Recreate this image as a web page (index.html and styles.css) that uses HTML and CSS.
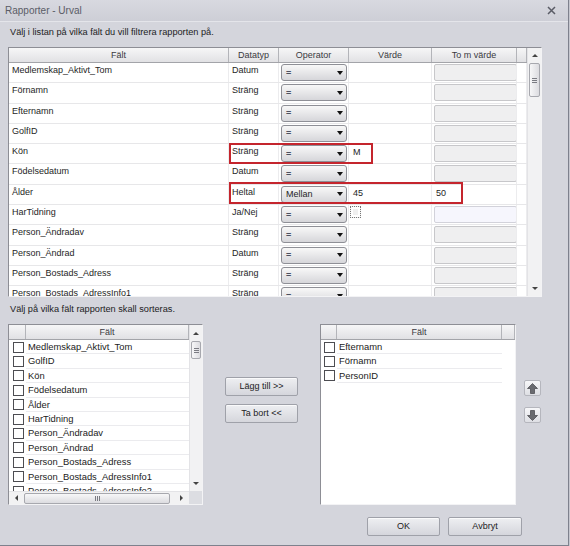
FILE: index.html
```html
<!DOCTYPE html>
<html>
<head>
<meta charset="utf-8">
<link rel="stylesheet" href="styles.css">
</head>
<body>
<div class="window">
  <div class="titlebar">
    <span class="title">Rapporter - Urval</span>
    <svg class="close" width="9" height="9" viewBox="0 0 9 9"><path d="M1 1L8 8M8 1L1 8" stroke="#5a5c66" stroke-width="1.5" fill="none"/></svg>
  </div>

  <div class="label label-top">Välj i listan på vilka fält du vill filtrera rapporten på.</div>

  <div class="grid">
    <div class="table">
      <div class="row head">
        <div class="hc">Fält</div><div class="hc">Datatyp</div><div class="hc">Operator</div><div class="hc">Värde</div><div class="hc">To m värde</div><div class="hc"></div>
      </div>
      <div class="row"><div class="c">Medlemskap_Aktivt_Tom</div><div class="c">Datum</div><div class="c"><div class="combo"><span class="eq">=</span><i class="tri"></i></div></div><div class="c"></div><div class="c"><div class="box"></div></div><div class="c"></div></div>
      <div class="row"><div class="c">Förnamn</div><div class="c">Sträng</div><div class="c"><div class="combo"><span class="eq">=</span><i class="tri"></i></div></div><div class="c"></div><div class="c"><div class="box"></div></div><div class="c"></div></div>
      <div class="row"><div class="c">Efternamn</div><div class="c">Sträng</div><div class="c"><div class="combo"><span class="eq">=</span><i class="tri"></i></div></div><div class="c"></div><div class="c"><div class="box"></div></div><div class="c"></div></div>
      <div class="row"><div class="c">GolfID</div><div class="c">Sträng</div><div class="c"><div class="combo"><span class="eq">=</span><i class="tri"></i></div></div><div class="c"></div><div class="c"><div class="box"></div></div><div class="c"></div></div>
      <div class="row"><div class="c">Kön</div><div class="c">Sträng</div><div class="c"><div class="combo"><span class="eq">=</span><i class="tri"></i></div></div><div class="c val">M</div><div class="c"><div class="box"></div></div><div class="c"></div></div>
      <div class="row"><div class="c">Födelsedatum</div><div class="c">Datum</div><div class="c"><div class="combo"><span class="eq">=</span><i class="tri"></i></div></div><div class="c"></div><div class="c"><div class="box"></div></div><div class="c"></div></div>
      <div class="row"><div class="c">Ålder</div><div class="c">Heltal</div><div class="c"><div class="combo"><span class="op">Mellan</span><i class="tri"></i></div></div><div class="c val">45</div><div class="c val">50</div><div class="c"></div></div>
      <div class="row"><div class="c">HarTidning</div><div class="c">Ja/Nej</div><div class="c"><div class="combo"><span class="eq">=</span><i class="tri"></i></div></div><div class="c"><div class="dotbox"></div></div><div class="c"><div class="box light"></div></div><div class="c"></div></div>
      <div class="row"><div class="c">Person_Ändradav</div><div class="c">Sträng</div><div class="c"><div class="combo"><span class="eq">=</span><i class="tri"></i></div></div><div class="c"></div><div class="c"><div class="box"></div></div><div class="c"></div></div>
      <div class="row"><div class="c">Person_Ändrad</div><div class="c">Datum</div><div class="c"><div class="combo"><span class="eq">=</span><i class="tri"></i></div></div><div class="c"></div><div class="c"><div class="box"></div></div><div class="c"></div></div>
      <div class="row"><div class="c">Person_Bostads_Adress</div><div class="c">Sträng</div><div class="c"><div class="combo"><span class="eq">=</span><i class="tri"></i></div></div><div class="c"></div><div class="c"><div class="box"></div></div><div class="c"></div></div>
      <div class="row"><div class="c">Person_Bostads_AdressInfo1</div><div class="c">Sträng</div><div class="c"><div class="combo"><span class="eq">=</span><i class="tri"></i></div></div><div class="c"></div><div class="c"><div class="box"></div></div><div class="c"></div></div>
    </div>
    <div class="vscroll">
      <div class="sbtn"><i class="up"></i></div>
      <div class="thumb"><span></span><span></span><span></span></div>
      <div class="track"></div>
      <div class="sbtn"><i class="down"></i></div>
    </div>
    <div class="mark mark-kon"></div>
    <div class="mark mark-alder"></div>
  </div>

  <div class="label label-bottom">Välj på vilka fält rapporten skall sorteras.</div>

  <div class="sortarea">
    <div class="list left">
      <div class="ltable">
        <div class="lrow lhead"><div class="hc"></div><div class="hc">Fält</div></div>
        <div class="lrow"><div class="cb"><i></i></div><div class="lt">Medlemskap_Aktivt_Tom</div></div>
        <div class="lrow"><div class="cb"><i></i></div><div class="lt">GolfID</div></div>
        <div class="lrow"><div class="cb"><i></i></div><div class="lt">Kön</div></div>
        <div class="lrow"><div class="cb"><i></i></div><div class="lt">Födelsedatum</div></div>
        <div class="lrow"><div class="cb"><i></i></div><div class="lt">Ålder</div></div>
        <div class="lrow"><div class="cb"><i></i></div><div class="lt">HarTidning</div></div>
        <div class="lrow"><div class="cb"><i></i></div><div class="lt">Person_Ändradav</div></div>
        <div class="lrow"><div class="cb"><i></i></div><div class="lt">Person_Ändrad</div></div>
        <div class="lrow"><div class="cb"><i></i></div><div class="lt">Person_Bostads_Adress</div></div>
        <div class="lrow"><div class="cb"><i></i></div><div class="lt">Person_Bostads_AdressInfo1</div></div>
        <div class="lrow"><div class="cb"><i></i></div><div class="lt">Person_Bostads_AdressInfo2</div></div>
      </div>
      <div class="vscroll small">
        <div class="sbtn"><i class="up"></i></div>
        <div class="thumb"><span></span><span></span><span></span></div>
        <div class="track"></div>
        <div class="sbtn"><i class="down"></i></div>
      </div>
      <div class="hscroll">
        <div class="hbtn"><i class="lefta"></i></div>
        <div class="hthumb"><span></span><span></span><span></span></div>
        <div class="htrack"></div>
        <div class="hbtn"><i class="righta"></i></div>
      </div>
      <div class="corner"></div>
    </div>

    <div class="midbtns">
      <div class="btn">Lägg till &gt;&gt;</div>
      <div class="btn">Ta bort &lt;&lt;</div>
    </div>

    <div class="list right">
      <div class="rtable">
        <div class="rrow rhead"><div class="hc"></div><div class="hc">Fält</div><div class="hc"></div></div>
        <div class="rrow"><div class="cb"><i></i></div><div class="lt">Efternamn</div></div>
        <div class="rrow"><div class="cb"><i></i></div><div class="lt">Förnamn</div></div>
        <div class="rrow"><div class="cb"><i></i></div><div class="lt">PersonID</div></div>
      </div>
    </div>

    <div class="movebtns">
      <div class="mbtn"><svg width="11" height="11" viewBox="0 0 11 11"><path d="M5.5 0.5L10.5 5.5H7.5V10.5H3.5V5.5H0.5Z" fill="#6a6b70" stroke="#505156" stroke-width="0.8"/></svg></div>
      <div class="mbtn"><svg width="11" height="11" viewBox="0 0 11 11"><path d="M5.5 10.5L10.5 5.5H7.5V0.5H3.5V5.5H0.5Z" fill="#6a6b70" stroke="#505156" stroke-width="0.8"/></svg></div>
    </div>
  </div>

  <div class="footer">
    <div class="btn fbtn">OK</div>
    <div class="btn fbtn wide">Avbryt</div>
  </div>
</div>
</body>
</html>
```

FILE: styles.css
```css
* { box-sizing: border-box; }
html, body { margin: 0; padding: 0; }
body {
  width: 570px;
  height: 546px;
  overflow: hidden;
  background: #c6c7cf;
  font-family: "Liberation Sans", Arial, sans-serif;
  color: #1e1e1e;
}
.window {
  width: 569px;
  height: 546px;
  background: #d4d5dc;
  border-right: 1px solid #7e818d;
  border-bottom: 1px solid #7e818d;
  display: flex;
  flex-direction: column;
}
.titlebar {
  height: 22px;
  flex: none;
  display: flex;
  align-items: center;
  justify-content: space-between;
  padding: 0 12px 0 5px;
  background: linear-gradient(#d8d9e0, #cdced6);
  border-bottom: 1px solid #e4e5ea;
  font-size: 10px;
  color: #5a5c66;
}
.close { display: block; }

.label {
  font-size: 9.2px;
  line-height: 12px;
  padding-left: 10px;
  color: #1c1c1c;
  flex: none;
}
.label-top { margin-top: 4px; }
.label-bottom { margin-top: 6px; }

/* top grid */
.grid {
  position: relative;
  flex: none;
  margin: 9px 0 0 8px;
  width: 534px;
  height: 250px;
  display: flex;
  background: #fff;
  border: 1px solid;
  border-color: #8d8e95 #f3f3f5 #f3f3f5 #8d8e95;
}
.table {
  width: 518px;
  display: flex;
  flex-direction: column;
  overflow: hidden;
}
.row {
  flex: none;
  display: grid;
  grid-template-columns: 220px 50px 70px 83px 85px 10px;
  height: 20.3px;
  border-bottom: 1px solid #e7e7e9;
  font-size: 9px;
  line-height: 12px;
}
.row.head {
  height: 15px;
  border-bottom: 1px solid #a3a4a9;
}
.hc {
  background: linear-gradient(#f6f6f7, #e1e1e4);
  border-right: 1px solid #b3b4b9;
  text-align: center;
  font-size: 9px;
  line-height: 14px;
  color: #3a3a3e;
}
.c {
  border-right: 1px solid #ececee;
  padding: 1px 0 0 3px;
  white-space: nowrap;
  overflow: hidden;
}
.c.val { padding-left: 4px; padding-top: 2px; }
.combo {
  margin: 0 0 0 -1px;
  width: 66px;
  height: 17px;
  border: 1px solid #8e8f96;
  border-radius: 3px;
  background: linear-gradient(#f8f8f8, #d6d6da);
  display: flex;
  align-items: center;
  padding: 0 3px 0 4px;
}
.eq { color: #4c5060; font-size: 9px; font-weight: bold; }
.op { color: #1e1e1e; font-size: 9px; }
.tri {
  margin-left: auto;
  width: 0;
  height: 0;
  border-left: 3.5px solid transparent;
  border-right: 3.5px solid transparent;
  border-top: 4px solid #111;
}
.box {
  margin: 0 0 0 -1px;
  width: 83px;
  height: 17px;
  border: 1px solid #c7c7ca;
  border-radius: 2px;
  background: #efeff0;
}
.box.light { background: #f6f6fd; border-color: #d2d2da; }
.dotbox {
  width: 11px;
  height: 12px;
  margin: 0 0 0 -2px;
  border: 1px dotted #777;
  background: #f0f0f0;
  box-shadow: inset 0 0 0 2px #fff;
}

/* scrollbars */
.vscroll {
  width: 14px;
  display: flex;
  flex-direction: column;
  background: #f2f2f3;
  border-left: 1px solid #e3e3e6;
}
.sbtn {
  height: 15px;
  flex: none;
  display: flex;
  align-items: center;
  justify-content: center;
}
.up, .down, .lefta, .righta {
  width: 0; height: 0;
}
.up { border-left: 3px solid transparent; border-right: 3px solid transparent; border-bottom: 3px solid #444; }
.down { border-left: 3px solid transparent; border-right: 3px solid transparent; border-top: 3px solid #444; }
.lefta { border-top: 3px solid transparent; border-bottom: 3px solid transparent; border-right: 3px solid #444; }
.righta { border-top: 3px solid transparent; border-bottom: 3px solid transparent; border-left: 3px solid #444; }
.thumb {
  flex: none;
  height: 34px;
  margin: 0 1px 0 1px;
  border: 1px solid #a7a8ae;
  border-radius: 2px;
  background: linear-gradient(90deg, #f7f7f8, #dcdce0);
  display: flex;
  flex-direction: column;
  align-items: center;
  justify-content: center;
  gap: 1px;
}
.thumb span { width: 5px; height: 1px; background: #7a7b82; }
.track { flex: 1; }

.vscroll.small { width: 13px; grid-column: 2; grid-row: 1; }
.vscroll.small .sbtn { height: 16px; }
.vscroll.small .thumb { height: 18px; }

/* sort area */
.sortarea {
  flex: none;
  display: flex;
  margin-top: 9px;
  height: 181px;
  padding-left: 8px;
}
.list {
  height: 181px;
  background: #fff;
  border: 1px solid;
  border-color: #8d8e95 #f3f3f5 #f3f3f5 #8d8e95;
}
.list.left {
  width: 195px;
  display: grid;
  grid-template-columns: 180px 13px;
  grid-template-rows: 166px 13px;
}
.ltable { grid-column: 1; grid-row: 1; overflow: hidden; }
.lrow, .rrow {
  display: grid;
  height: 14.4px;
  font-size: 9.4px;
  line-height: 13px;
  color: #222;
}
.lrow { grid-template-columns: 17px 163px; }
.rrow { grid-template-columns: 16px 165px; }
.rrow.rhead { grid-template-columns: 16px 165px 13px; }
.lhead, .rhead { height: 15px; border-bottom: 1px solid #a3a4a9; }
.cb {
  display: flex;
  align-items: center;
  padding-left: 4px;
}
.rrow .cb { padding-left: 3px; }
.cb i {
  width: 11px;
  height: 11px;
  border: 1px solid #4d4d52;
  background: #fff;
}
.lt {
  padding-left: 2px;
  border-bottom: 1px solid #ebebee;
  white-space: nowrap;
  overflow: hidden;
}
.rtable { width: 194px; }

.hscroll {
  grid-column: 1;
  grid-row: 2;
  display: flex;
  align-items: center;
  background: #f2f2f3;
  border-top: 1px solid #e3e3e6;
}
.hbtn {
  width: 15px;
  height: 12px;
  flex: none;
  display: flex;
  align-items: center;
  justify-content: center;
}
.hthumb {
  width: 146px;
  height: 11px;
  flex: none;
  border: 1px solid #a7a8ae;
  border-radius: 2px;
  background: linear-gradient(#f7f7f8, #dcdce0);
  display: flex;
  align-items: center;
  justify-content: center;
  gap: 1px;
}
.hthumb span { width: 1px; height: 5px; background: #7a7b82; }
.htrack { flex: 1; }
.corner { grid-column: 2; grid-row: 2; background: #dcdde2; }

.midbtns {
  width: 73px;
  margin-left: 22px;
  padding-top: 53px;
  display: flex;
  flex-direction: column;
  gap: 8px;
}
.btn {
  height: 19px;
  width: 73px;
  border: 1px solid #9fa1a9;
  border-radius: 2px;
  background: linear-gradient(#eeeff2, #d5d6dc);
  font-size: 9px;
  line-height: 17px;
  text-align: center;
  color: #222;
  box-shadow: inset 0 1px 0 #fafafb;
}
.list.right {
  width: 196px;
  margin-left: 22px;
}
.movebtns {
  margin-left: 8px;
  padding-top: 56px;
  display: flex;
  flex-direction: column;
  gap: 11px;
}
.mbtn {
  width: 17px;
  height: 16px;
  border: 1px solid #b5b6bd;
  border-radius: 2px;
  background: linear-gradient(#f7f7f9, #dedfe4);
  display: flex;
  align-items: center;
  justify-content: center;
}
.mbtn svg { display: block; }

.footer {
  flex: none;
  margin-top: 12px;
  display: flex;
  justify-content: flex-end;
  gap: 8px;
  padding-right: 46px;
}
.fbtn.wide { width: 74px; }

/* red highlight marks */
.mark {
  position: absolute;
  border: 2px solid #c4252d;
  pointer-events: none;
}
.mark-kon { left: 220px; top: 95px; width: 144px; height: 21px; }
.mark-alder { left: 220px; top: 134px; width: 234px; height: 22px; }
```
